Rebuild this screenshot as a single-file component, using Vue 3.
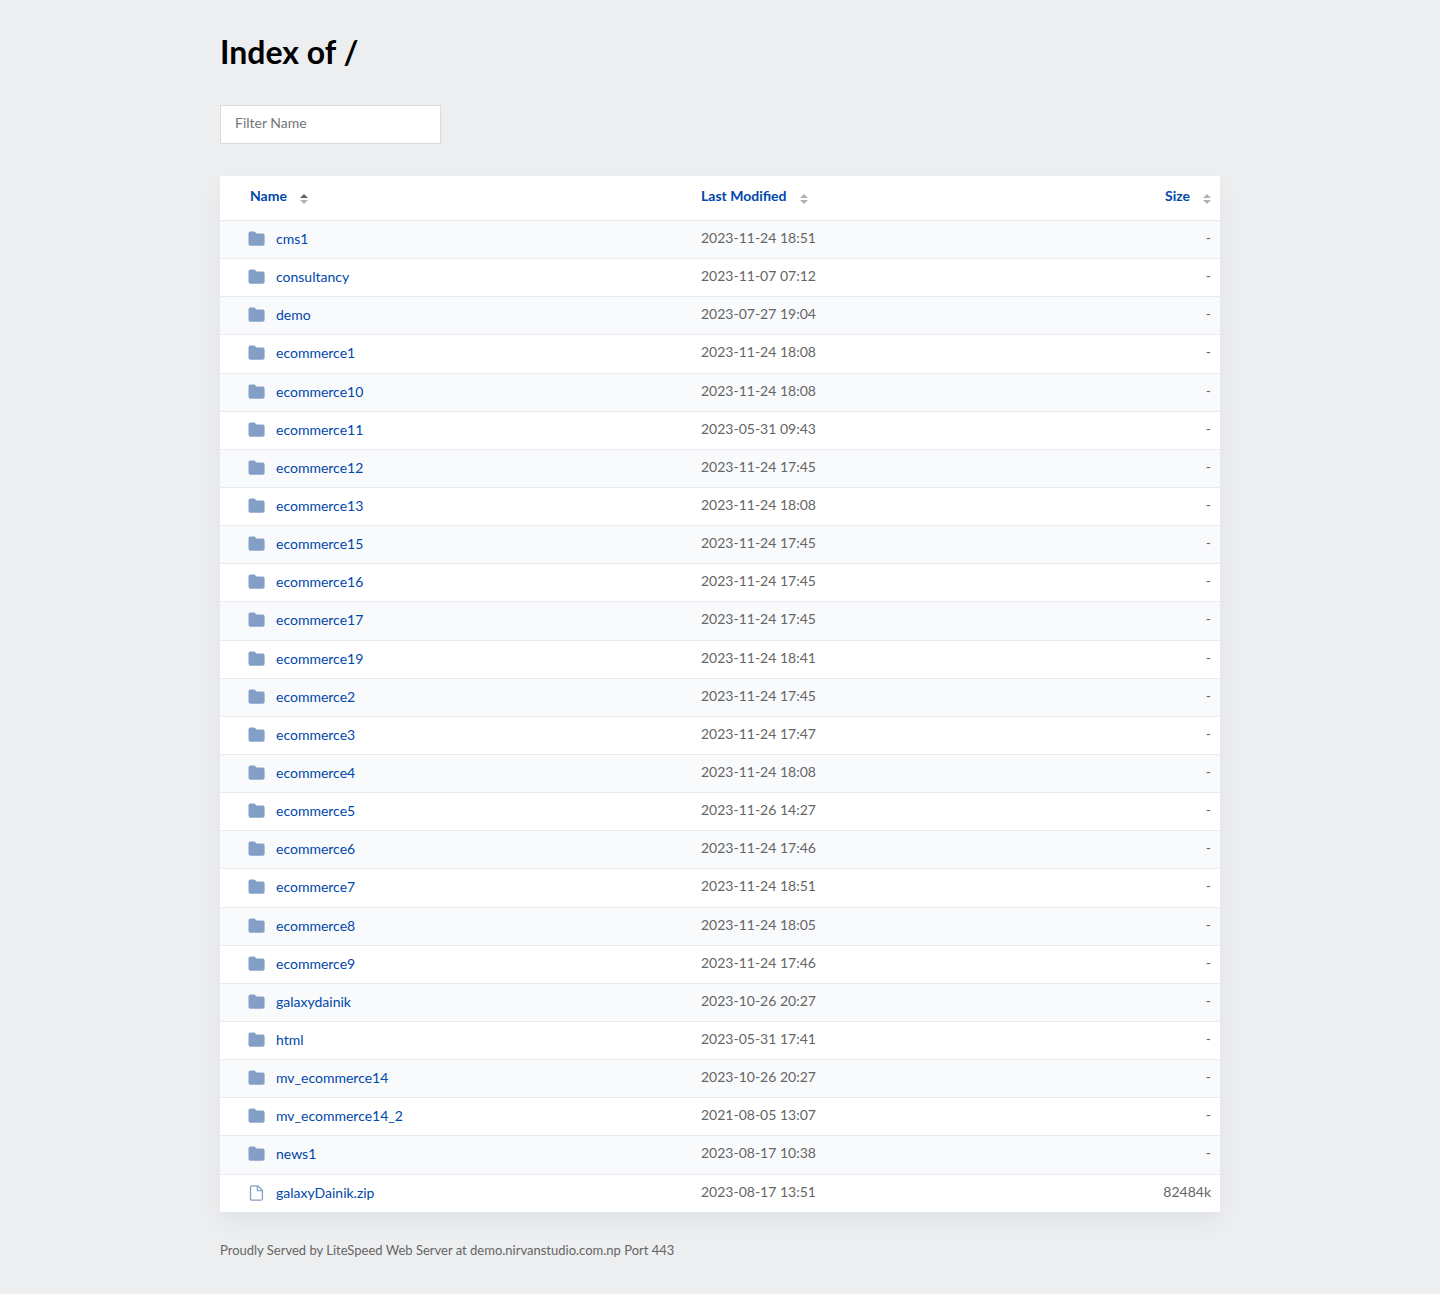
<script setup>
import { computed, ref } from 'vue'

const filter = ref('')
const sortKey = ref('name')
const ascending = ref(true)

const columns = [
  { key: 'name', label: 'Name' },
  { key: 'modified', label: 'Last Modified' },
  { key: 'size', label: 'Size' },
]

const entries = [
  ['cms1', '2023-11-24 18:51'],
  ['consultancy', '2023-11-07 07:12'],
  ['demo', '2023-07-27 19:04'],
  ['ecommerce1', '2023-11-24 18:08'],
  ['ecommerce10', '2023-11-24 18:08'],
  ['ecommerce11', '2023-05-31 09:43'],
  ['ecommerce12', '2023-11-24 17:45'],
  ['ecommerce13', '2023-11-24 18:08'],
  ['ecommerce15', '2023-11-24 17:45'],
  ['ecommerce16', '2023-11-24 17:45'],
  ['ecommerce17', '2023-11-24 17:45'],
  ['ecommerce19', '2023-11-24 18:41'],
  ['ecommerce2', '2023-11-24 17:45'],
  ['ecommerce3', '2023-11-24 17:47'],
  ['ecommerce4', '2023-11-24 18:08'],
  ['ecommerce5', '2023-11-26 14:27'],
  ['ecommerce6', '2023-11-24 17:46'],
  ['ecommerce7', '2023-11-24 18:51'],
  ['ecommerce8', '2023-11-24 18:05'],
  ['ecommerce9', '2023-11-24 17:46'],
  ['galaxydainik', '2023-10-26 20:27'],
  ['html', '2023-05-31 17:41'],
  ['mv_ecommerce14', '2023-10-26 20:27'],
  ['mv_ecommerce14_2', '2021-08-05 13:07'],
  ['news1', '2023-08-17 10:38'],
  ['galaxyDainik.zip', '2023-08-17 13:51', 82484],
].map(([name, modified, size]) => ({ name, modified, size: size ?? -1, isFile: size !== undefined }))

// Folders always come before files, whatever the sort order.
const rows = computed(() => {
  const direction = ascending.value ? 1 : -1
  const key = sortKey.value
  return entries
    .filter((e) => e.name.toLowerCase().includes(filter.value.toLowerCase()))
    .sort((a, b) => a.isFile - b.isFile || direction * (a[key] > b[key] ? 1 : a[key] < b[key] ? -1 : 0))
})

function sortBy(key) {
  ascending.value = sortKey.value === key ? !ascending.value : true
  sortKey.value = key
}
</script>

<template>
  <main class="page">
    <h1>Index of /</h1>
    <input v-model="filter" class="filter" type="text" placeholder="Filter Name" aria-label="Filter Name" />
    <table class="listing">
      <thead>
        <tr>
          <th v-for="col in columns" :key="col.key" :class="col.key" scope="col">
            <button type="button" @click="sortBy(col.key)">
              {{ col.label }}
              <svg class="sort" viewBox="0 0 8 10" aria-hidden="true">
                <path :class="{ active: sortKey === col.key && ascending }" d="M0 4L4 0L8 4Z" />
                <path :class="{ active: sortKey === col.key && !ascending }" d="M0 6L4 10L8 6Z" />
              </svg>
            </button>
          </th>
        </tr>
      </thead>
      <tbody>
        <tr v-for="row in rows" :key="row.name">
          <td class="name">
            <a href="#">
              <span class="icon">
                <svg v-if="row.isFile" viewBox="0 0 17 16" aria-hidden="true">
                  <path class="line" d="M4 .8H9.8L14.4 5.2V13.7Q14.4 15.2 12.9 15.2H4Q2.5 15.2 2.5 13.7V2.3Q2.5 .8 4 .8ZM9.4 1V5.6H14.4" />
                </svg>
                <svg v-else viewBox="0 0 17 16" aria-hidden="true">
                  <path class="solid" d="M2.4 .6H6.2Q7 .6 7.5 1.5L8.2 2.5H14.7Q16.6 2.5 16.6 4.4V12.8Q16.6 14.7 14.7 14.7H2.4Q.5 14.7 .5 12.8V2.5Q.5 .6 2.4 .6Z" />
                </svg>
              </span>
              {{ row.name }}
            </a>
          </td>
          <td class="modified">{{ row.modified }}</td>
          <td class="size">{{ row.isFile ? row.size + 'k' : '-' }}</td>
        </tr>
      </tbody>
    </table>
    <footer>Proudly Served by LiteSpeed Web Server at demo.nirvanstudio.com.np Port 443</footer>
  </main>
</template>

<style>
body {
  margin: 0;
  background: #edeef0;
}
</style>

<style scoped>
.page {
  box-sizing: border-box;
  max-width: 1040px;
  margin: 0 auto;
  padding: 32px 20px;
  font-family: Lato, "Liberation Sans", sans-serif;
  font-size: 14px;
  line-height: 1.15;
  color: #656565;
}

h1 {
  margin: 0 0 33px;
  font-size: 32px;
  line-height: 40px;
  font-weight: 700;
  color: #000;
}

.filter {
  display: block;
  box-sizing: border-box;
  width: 221px;
  max-width: 100%;
  height: 39px;
  margin: 0 0 32px;
  padding: 8px 14px 12px;
  border: 1px solid #dadbdd;
  border-radius: 0;
  background: #fff;
  font: inherit;
  color: #333;
}

.filter::placeholder {
  color: #757575;
}

.listing {
  width: 100%;
  table-layout: fixed;
  border-collapse: separate;
  border-spacing: 0;
  background: #fff;
  box-shadow: 0 10px 20px 0 rgba(13, 73, 83, 0.06);
}

th,
td {
  box-sizing: border-box;
  padding: 0 9px;
  text-align: left;
}

th {
  height: 44px;
  vertical-align: top;
}

th.name {
  width: 47%;
  padding-left: 30px;
}

th.modified {
  width: 29%;
}

th button {
  display: inline-flex;
  align-items: flex-start;
  gap: 13px;
  margin-top: 10px;
  padding: 0;
  border: 0;
  background: none;
  font: inherit;
  font-weight: 700;
  line-height: 20px;
  color: #0047ab;
  cursor: pointer;
}

.sort {
  width: 8px;
  height: 10px;
  margin-top: 8px;
  fill: #b2b2b2;
}

.sort .active {
  fill: #656565;
}

td {
  padding-top: 6px;
  padding-bottom: 9px;
  border-top: 1px solid #e9ebee;
}

td.name {
  padding-bottom: 7px;
  padding-left: 28px;
}

.modified {
  padding-left: 11px;
}

th.size,
td.size {
  text-align: right;
}

tbody tr:nth-child(odd) {
  background: #f9fafc;
}

a {
  display: flex;
  align-items: center;
  gap: 11px;
  color: #0047ab;
  text-decoration: none;
}

a:hover {
  text-decoration: underline;
}

.icon {
  display: flex;
  align-items: center;
  height: 1.15em;
  font-size: 21px;
}

.icon svg {
  width: 17px;
  height: 16px;
}

.solid {
  fill: #839fc6;
}

.line {
  fill: none;
  stroke: #839fc6;
  stroke-width: 1.3;
}

footer {
  margin-top: 30px;
  font-size: 13px;
  line-height: 16px;
}
</style>
